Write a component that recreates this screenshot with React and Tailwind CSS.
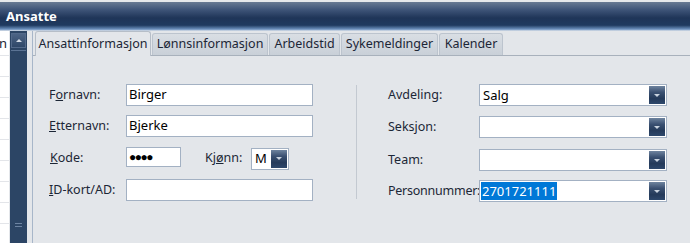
import React from "react";

const font = { fontFamily: '"Noto Sans", "Open Sans", sans-serif' };

function Arrow() {
  return (
    <svg width="8" height="5" viewBox="0 0 8 5">
      <path d="M1 1 H7 L4 4 Z" fill="#c9d3df" />
    </svg>
  );
}

function Combo({ w, value, selected }) {
  return (
    <div className={`flex shrink-0 h-[22px] ${w} border border-[#a3b1c3] bg-white`}>
      <div className="flex-1 flex items-center pl-[1px] text-[13px] text-black leading-none">
        {value ? (
          selected ? (
            <span className="bg-[#0078d7] text-white px-[1px] h-[18px] flex items-center">{value}</span>
          ) : (
            <span className="pl-[2px]">{value}</span>
          )
        ) : null}
      </div>
      <div className="w-[16px] m-[1px] ml-0 flex items-center justify-center bg-[linear-gradient(to_bottom,#6f849f_0%,#3a5071_35%,#243a5a_70%,#2d476b_100%)]">
        <Arrow />
      </div>
    </div>
  );
}

function Label({ children, w, extra = "" }) {
  return <div className={`${w} shrink-0 text-[12.5px] text-[#1c2636] leading-none whitespace-nowrap ${extra}`}>{children}</div>;
}

export default function App() {
  return (
    <div className="w-[690px] h-[243px] overflow-hidden bg-[#e3e6ea] flex flex-col" style={font}>
      {/* Title bar */}
      <div className="h-[31px] border-t-2 border-[#e6e8eb] flex items-center pl-[6px] bg-[linear-gradient(to_bottom,#687a93_0%,#40567a_25%,#1f3558_55%,#1f3a60_80%,#6d92c0_94%,#dfe4ea_100%)]">
        <span className="text-white font-bold text-[13px] leading-none -mt-[1px]">Ansatte</span>
      </div>
      <div className="flex flex-1 min-h-0">
        {/* Left list */}
        <div className="w-[9px] bg-white flex flex-col overflow-hidden">
          <div className="h-[25px] border-b border-[#e3e5e9] text-[13px] text-[#1c2636] leading-[25px] -ml-[1px]">n</div>
          {Array.from({ length: 9 }).map((_, i) => (
            <div key={i} className="h-[21px] border-b border-[#e3e5e9] shrink-0" />
          ))}
        </div>
        <div className="w-[1px]" />
        {/* Scrollbar */}
        <div className="w-[17px] bg-[#2c4565] flex flex-col pt-[2px]">
          <div className="h-[15px] mx-[1px] border border-[#52698a] bg-[linear-gradient(to_bottom,#4d6485,#2e4768)] flex items-center justify-center">
            <svg width="8" height="5" viewBox="0 0 8 5">
              <path d="M1 4 H7 L4 1 Z" fill="#d4dce6" />
            </svg>
          </div>
          <div className="mt-[2px] mx-[1px] flex-1 border-t border-[#5b7394] flex flex-col justify-end items-center pb-[16px]">
            <div className="w-[7px] h-[1px] bg-[#6d84a2] mb-[2px]" />
            <div className="w-[7px] h-[1px] bg-[#6d84a2]" />
          </div>
        </div>
        <div className="w-[5px]" />
        <div className="w-[1px] bg-[#a7b6c9]" />
        {/* Main panel */}
        <div className="flex-1 flex flex-col">
          {/* Tabs */}
          <div className="h-[25px] flex items-end pl-[2px] border-b border-[#a8b1bc]">
            <div className="h-[25px] w-[116px] -mb-[1px] rounded-t-[3px] border border-b-0 border-[#b6bec8] bg-[#e3e6ea] flex items-center justify-center text-[12.5px] text-[#1c2636]">
              Ansattinformasjon
            </div>
            {[
              ["Lønnsinformasjon", "w-[116px]"],
              ["Arbeidstid", "w-[71px]"],
              ["Sykemeldinger", "w-[97px]"],
              ["Kalender", "w-[64px]"],
            ].map(([t, w]) => (
              <div
                key={t}
                className={`h-[22px] ${w} rounded-t-[3px] border border-b-0 border-[#bcc4ce] bg-[linear-gradient(to_bottom,#d9dee4,#c9d0d8)] flex items-center justify-center text-[12.5px] text-[#1c2636] ml-[1px]`}
              >
                {t}
              </div>
            ))}
          </div>
          {/* Form */}
          <div className="flex pt-[28px] pl-[16px]">
            <div className="flex flex-col w-[264px] shrink-0">
              <div className="flex items-center h-[22px]">
                <Label w="w-[77px]">F<u>o</u>rnavn:</Label>
                <div className="w-[187px] h-[22px] border border-[#a3b1c3] bg-white flex items-center pl-[2px] text-[13px] text-black">Birger</div>
              </div>
              <div className="flex items-center h-[22px] mt-[9px]">
                <Label w="w-[77px]"><u>E</u>tternavn:</Label>
                <div className="w-[187px] h-[22px] border border-[#a3b1c3] bg-white flex items-center pl-[2px] text-[13px] text-black">Bjerke</div>
              </div>
              <div className="flex items-center h-[23px] mt-[10px]">
                <Label w="w-[77px]"><span className="pl-[1px]"><u>K</u>ode:</span></Label>
                <div className="w-[55px] h-[20px] -mt-[3px] border border-[#a3b1c3] bg-white flex items-center pl-[2px] text-[12px] text-black tracking-[-1.5px] leading-none">●●●●</div>
                <div className="w-[70px] pl-[24px] text-[12.5px] text-[#1c2636] leading-none">Kj<u>ø</u>nn:</div>
                <Combo w="w-[38px]" value="M" />
              </div>
              <div className="flex items-center h-[22px] mt-[9px]">
                <Label w="w-[77px]"><u>I</u>D-kort/AD:</Label>
                <div className="w-[187px] h-[22px] border border-[#a3b1c3] bg-white" />
              </div>
            </div>
            <div className="w-[43px] shrink-0" />
            <div className="w-[1px] h-[114px] mt-[1px] bg-[#c3c9d1] shrink-0" />
            <div className="w-[31px] shrink-0" />
            <div className="flex flex-col">
              <div className="flex items-center">
                <Label w="w-[91px]">Avdeling:</Label>
                <Combo w="w-[188px]" value="Salg" />
              </div>
              <div className="flex items-center mt-[10px]">
                <Label w="w-[91px]">Seksjon:</Label>
                <Combo w="w-[188px]" />
              </div>
              <div className="flex items-center mt-[11px]">
                <Label w="w-[91px]">Team:</Label>
                <Combo w="w-[188px]" />
              </div>
              <div className="flex items-center mt-[9px]">
                <Label w="w-[91px]" extra="tracking-[-0.25px]">Personnummer:</Label>
                <Combo w="w-[188px]" value="2701721111" selected />
              </div>
            </div>
          </div>
        </div>
      </div>
    </div>
  );
}
